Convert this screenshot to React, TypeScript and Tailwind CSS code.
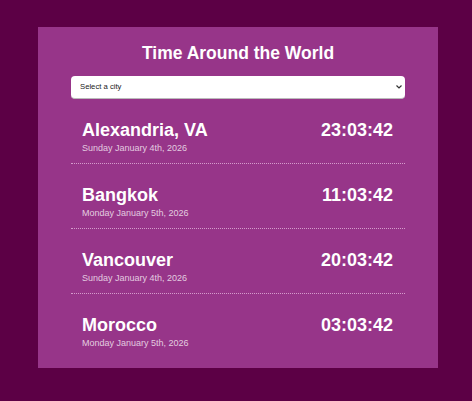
import { useState } from 'react'

const cities = [
  { name: 'Alexandria, VA', date: 'Sunday January 4th, 2026', time: '23:03:42' },
  { name: 'Bangkok', date: 'Monday January 5th, 2026', time: '11:03:42' },
  { name: 'Vancouver', date: 'Sunday January 4th, 2026', time: '20:03:42' },
  { name: 'Morocco', date: 'Monday January 5th, 2026', time: '03:03:42' },
]

export default function App() {
  const [city, setCity] = useState('')

  return (
    <div className="min-h-[401px] bg-[#5c0045] pt-[27px] font-['Liberation_Sans',Arial,sans-serif]">
      <div className="ml-[38px] w-[400px] bg-[#973589] px-[33px] pt-[16px] pb-[10px]">
        <h1 className="text-center text-[17.5px] font-bold leading-[20px] text-white">
          Time Around the World
        </h1>

        {/* city picker */}
        <div className="relative mt-[13px]">
          <select
            value={city}
            onChange={e => setCity(e.target.value)}
            className="block h-[23px] w-full appearance-none rounded-[4px] border-b border-[#bbb] bg-white pl-[9px] pr-[12px] text-[7.7px] text-[#222]"
          >
            <option value="">Select a city</option>
            {cities.map(c => (
              <option key={c.name} value={c.name}>{c.name}</option>
            ))}
          </select>
          <svg
            className="pointer-events-none absolute right-[3px] top-[9px]"
            width="6"
            height="4"
            viewBox="0 0 6 4"
          >
            <path d="M0.5 0.5 L3 3 L5.5 0.5" fill="none" stroke="#333" strokeWidth="1.2" />
          </svg>
        </div>

        <ul>
          {cities.map((c, i) => (
            <li
              key={c.name}
              className={`flex items-start justify-between pt-[21px] pb-[10px] pl-[11px] pr-[12px] ${
                i < cities.length - 1 ? 'border-b border-dotted border-[#d59bcc]' : ''
              }`}
            >
              <div>
                <p className="text-[18px] font-bold leading-[21px] text-white">{c.name}</p>
                <p className="mt-[2px] text-[9px] leading-[10px] text-white/75">{c.date}</p>
              </div>
              <p className="text-[18px] font-bold leading-[21px] text-white">{c.time}</p>
            </li>
          ))}
        </ul>
      </div>
    </div>
  )
}
